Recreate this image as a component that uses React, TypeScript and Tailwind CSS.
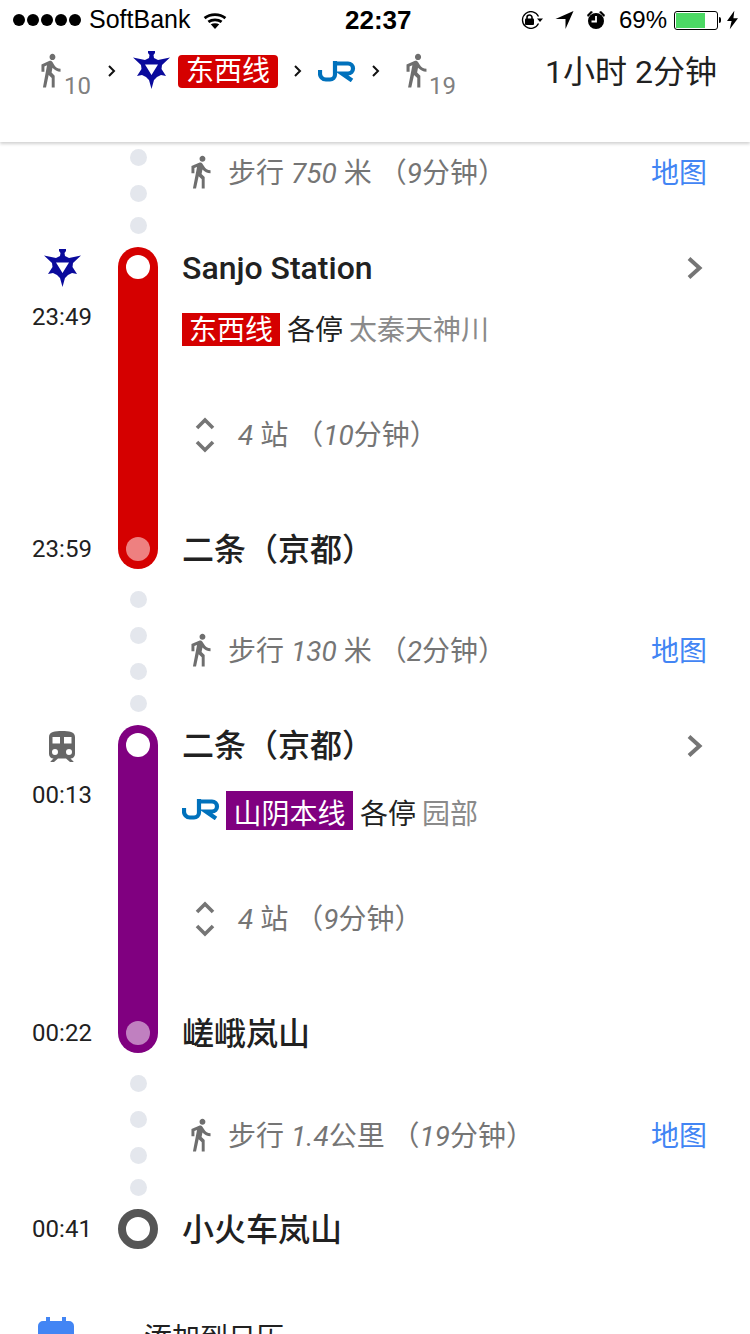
import React from 'react';

const font = "font-['Roboto','Noto_Sans_CJK_SC',sans-serif]";

const WalkIcon = ({ className }: { className: string }) => (
    <svg viewBox="5 1 15 23" className={className} fill="#6e6e6e" preserveAspectRatio="none">
        <path d="M13.5 5.5c1.1 0 2-.9 2-2s-.9-2-2-2-2 .9-2 2 .9 2 2 2zM9.8 8.9L7 23h2.1l1.8-8 2.1 2v6h2v-7.5l-2.1-2 .6-3C14.8 12 16.8 13 19 13v-2c-1.9 0-3.5-1-4.3-2.4l-1-1.6c-.4-.6-1-1-1.7-1-.3 0-.5.1-.8.1L6 8.3V13h2V9.6l1.8-.7" />
    </svg>
);

// Kyoto subway mark
const SubwayLogo = ({ className }: { className: string }) => (
    <svg viewBox="0 0 37 38" className={className}>
        <path
            fill="#0a0a9c"
            fillRule="evenodd"
            d="M15 0L22 0L22 2L20.500 4L21 7L25 9L37 6.500L29 14L28.500 18L33 25L28 24L24 26L21 29L18.500 38L16 29L13 26L9 24L4 25L8.500 18L8 14L0 6.500L12 9L16 7L16.500 4L15 2ZM12 13.500L25 13.500L18.500 24Z"
        />
    </svg>
);

const JrLogo = ({ className }: { className: string }) => (
    <svg viewBox="0 0 38 21" className={className} fill="none" stroke="#0071bc" strokeWidth="4.2">
        <path d="M2 9v3a6 6 0 0 0 6 6.500h4a5 5 0 0 0 5-5V0" />
        <path d="M19 2.500h11a5 5 0 0 1 0 10h-6l10 7" />
    </svg>
);

const Chevron = () => (
    <svg viewBox="0 0 8 12" className="h-3 w-2" fill="none" stroke="#111" strokeWidth="2">
        <path d="M1 1l5 5-5 5" />
    </svg>
);

const StatusBar = () => (
    <div className="flex h-10 items-center pl-[13px] font-['Liberation_Sans',sans-serif] text-[25px] text-black">
        <div className="flex gap-[2px]">
            {[0, 1, 2, 3, 4].map((i) => (
                <span key={i} className="h-3 w-3 rounded-full bg-black" />
            ))}
        </div>
        <span className="ml-2 w-[114px]">SoftBank</span>
        <svg viewBox="0 0 24 18" className="h-[17px] w-[24px]" fill="none" stroke="#000" strokeWidth="3">
            <path d="M1 6.500c6-5 16-5 22 0M5 10.500c4-3 10-3 14 0" />
            <path d="M7.500 13c2.500-1.600 6.500-1.600 9 0L12 18z" fill="#000" stroke="none" />
        </svg>
        <span className="ml-[118px] w-[174px] text-[26px] font-bold">22:37</span>
        <svg viewBox="0 0 24 18" className="h-[18px] w-[24px]" fill="none" stroke="#000" strokeWidth="1.300">
            <path d="M19.500 12.500a8.400 8.400 0 1 1 0-7" />
            <path d="M18 7.500h6l-3 3.500z" fill="#000" stroke="none" />
            <rect x="6" y="7.500" width="9" height="6.500" rx="1" fill="#000" stroke="none" />
            <path d="M8 8V6.500a2.500 2.500 0 0 1 5 0V8" strokeWidth="1.600" />
        </svg>
        <svg viewBox="0 0 18 18" className="ml-3 h-[18px] w-[19px]" fill="#000">
            <path d="M18 0L10 18V8H0z" />
        </svg>
        <svg viewBox="0 0 20 20" className="ml-3 h-[20px] w-[20px]" fill="#000">
            <circle cx="10" cy="11" r="8" />
            <path d="M1 5l4-4 2 1-5 5zM19 5l-4-4-2 1 5 5z" />
            <path d="M10 6v5.500H5.500" fill="none" stroke="#fff" strokeWidth="1.800" />
        </svg>
        <span className="ml-[13px] text-[24px]">69%</span>
        <div className="ml-[7px] flex h-[19px] w-[44px] items-center rounded-[3px] border border-black p-[1px]">
            <div className="h-full w-[29px] bg-[#4cd964]" />
        </div>
        <span className="ml-[1px] h-[6px] w-[2px] rounded-r-full bg-black" />
        <svg viewBox="0 0 12 20" className="ml-[6px] h-[20px] w-[11px]" fill="#000">
            <path d="M8 0L0 11h5l-2 9 9-12H7z" />
        </svg>
    </div>
);

const Header = () => (
    <div className={`relative z-10 h-[142px] bg-white shadow-[0_2px_3px_rgba(0,0,0,0.18)] ${font}`}>
        <StatusBar />
        <div className="flex h-[62px] items-center pl-10 pr-[33px]">
            <WalkIcon className="mb-[1px] h-[36px] w-[22px]" />
            <span className="ml-[2px] mt-[30px] text-[24px] leading-none text-[#808080]">10</span>
            <div className="mb-[1px] ml-[17px]"><Chevron /></div>
            <SubwayLogo className="mb-[2px] ml-[17px] h-[38px] w-[37px]" />
            <span className="ml-2 flex h-[33px] w-[100px] items-center justify-center rounded-[4px] bg-[#d50000] pt-[2px] text-[28px] text-white">东西线</span>
            <div className="mb-[1px] ml-4"><Chevron /></div>
            <JrLogo className="ml-4 h-[21px] w-[38px]" />
            <div className="mb-[1px] ml-4"><Chevron /></div>
            <WalkIcon className="mb-[1px] ml-[25px] h-[36px] w-[23px]" />
            <span className="ml-[1px] mt-[30px] text-[24px] leading-none text-[#808080]">19</span>
            <span className="ml-auto mt-[1px] text-[32px] leading-none text-[#212121]">1小时 2分钟</span>
        </div>
    </div>
);

const Dot = ({ className }: { className: string }) => (
    <span className={`h-[17px] w-[17px] shrink-0 rounded-full bg-[#e4e7ed] ${className}`} />
);

// three gaps in the first walk, the later ones start with a longer drop below the pill
const Dots = ({ first }: { first?: boolean }) => (
    <div className="flex w-10 shrink-0 flex-col items-center">
        {first ? (
            <>
                <Dot className="mt-[7px]" />
                <Dot className="mt-[19px]" />
                <Dot className="mt-[15px]" />
            </>
        ) : (
            <>
                <Dot className="mt-[22px]" />
                <Dot className="mt-[19px]" />
                <Dot className="mt-[19px]" />
                <Dot className="mt-[15px]" />
            </>
        )}
    </div>
);

type WalkProps = { rowClass: string; textClass: string; first?: boolean; children: React.ReactNode };

const WalkRow = ({ rowClass, textClass, first, children }: WalkProps) => (
    <div className={`flex items-start pl-[118px] pr-[43px] ${rowClass}`}>
        <Dots first={first} />
        <div className={`ml-[32px] flex flex-1 items-center ${textClass}`}>
            <WalkIcon className="h-[35px] w-[22px]" />
            <span className="ml-4 whitespace-pre pt-[3px] text-[28px] leading-[36px] text-[#757575]">{children}</span>
            <span className="ml-auto pt-[3px] text-[28px] leading-[36px] text-[#4285f4]">地图</span>
        </div>
    </div>
);

type TransitProps = {
    rowClass: string;
    pillClass: string;
    endDotClass: string;
    icon: React.ReactNode;
    start: string;
    end: string;
    title: string;
    lineClass: string;
    badge: React.ReactNode;
    towards: string;
    stops: string;
    endName: string;
};

const TransitRow = ({ rowClass, pillClass, endDotClass, icon, start, end, title, lineClass, badge, towards, stops, endName }: TransitProps) => (
    <div className={`flex ${rowClass}`}>
        <div className="flex w-[118px] shrink-0 flex-col items-center pl-[6px]">
            <div className="mt-[1px] flex h-[40px] items-center">{icon}</div>
            <span className="mt-[15px] text-[24px] leading-[28px] text-[#212121]">{start}</span>
            <span className="mb-[6px] mt-auto text-[24px] leading-[28px] text-[#212121]">{end}</span>
        </div>
        <div className={`flex w-10 shrink-0 flex-col items-center justify-between rounded-full py-2 ${pillClass}`}>
            <span className="h-6 w-6 rounded-full bg-white" />
            <span className={`h-6 w-6 rounded-full ${endDotClass}`} />
        </div>
        <div className="relative ml-[24px] flex flex-1 flex-col pr-[47px]">
            <div className="flex h-[42px] items-center justify-between">
                <span className="text-[32px] font-medium leading-[42px] text-[#212121]">{title}</span>
                <svg viewBox="0 0 16 24" className="h-6 w-4" fill="none" stroke="#757575" strokeWidth="4">
                    <path d="M2 2.500l10.500 9.500L2 21.500" />
                </svg>
            </div>
            <div className={`flex h-[34px] items-center text-[28px] ${lineClass}`}>
                {badge}
                <span className="ml-[7px] pt-[3px] text-[#212121]">各停</span>
                <span className="ml-[6px] pt-[3px] text-[#8a8a8a]">{towards}</span>
            </div>
            <div className="ml-[13px] mt-[69px] flex items-center">
                <svg viewBox="0 0 20 38" className="h-[38px] w-5" fill="none" stroke="#757575" strokeWidth="3.600">
                    <path d="M2 12l8-8 8 8M2 26l8 8 8-8" />
                </svg>
                <span className="ml-[23px] whitespace-pre pt-[3px] text-[28px] leading-[36px] text-[#757575]">
                    <i>4</i> 站 （<i>{stops}</i>分钟）
                </span>
            </div>
            <span className="absolute bottom-[-2px] left-0 text-[32px] font-medium leading-[42px] text-[#212121]">{endName}</span>
        </div>
    </div>
);

const TrainIcon = () => (
    <svg viewBox="0 0 26 31" className="h-[31px] w-[26px]" fill="#666666">
        <path
            fillRule="evenodd"
            d="M13 0C6 0 0 .8 0 6v17c0 2.500 2 4.500 4.500 4.500L1.500 30.500V31h3.500l4-3.500h8l4 3.500h3.500v-.5l-3-3c2.500 0 4.500-2 4.500-4.500V6c0-5.200-6-6-13-6zM3.500 6h7.500v6.500H3.500zM15 6h7.500v6.500H15zM6 24a3 3 0 1 1 0-6 3 3 0 0 1 0 6zM20 24a3 3 0 1 1 0-6 3 3 0 0 1 0 6z"
        />
    </svg>
);

export default function App() {
    return (
        <div className={`h-[1334px] w-[750px] overflow-hidden bg-white ${font}`}>
            <Header />

            <WalkRow first rowClass="h-[105px]" textClass="mt-[11px]">
                步行 <i>750</i> 米 （<i>9</i>分钟）
            </WalkRow>

            <TransitRow
                rowClass="h-[322px]"
                pillClass="bg-[#d50000]"
                endDotClass="bg-[#ee8080]"
                icon={<SubwayLogo className="h-[38px] w-[37px]" />}
                start="23:49"
                end="23:59"
                title="Sanjo Station"
                lineClass="mt-[23px]"
                badge={<span className="flex h-[33px] w-[98px] items-center justify-center bg-[#d50000] pt-[3px] text-white">东西线</span>}
                towards="太秦天神川"
                stops="10"
                endName="二条（京都）"
            />

            <WalkRow rowClass="h-[156px]" textClass="mt-[62px]">
                步行 <i>130</i> 米 （<i>2</i>分钟）
            </WalkRow>

            <TransitRow
                rowClass="h-[328px]"
                pillClass="bg-[#800080]"
                endDotClass="bg-[#c080c0]"
                icon={<TrainIcon />}
                start="00:13"
                end="00:22"
                title="二条（京都）"
                lineClass="mt-[29px]"
                badge={
                    <>
                        <JrLogo className="mb-[7px] mr-[6px] h-[21px] w-[38px]" />
                        <span className="mb-[6px] flex h-[39px] w-[127px] items-center justify-center bg-[#800080] pt-[9px] text-white">山阴本线</span>
                    </>
                }
                towards="园部"
                stops="9"
                endName="嵯峨岚山"
            />

            <WalkRow rowClass="h-[156px]" textClass="mt-[63px]">
                步行 <i>1.4</i>公里 （<i>19</i>分钟）
            </WalkRow>

            {/* Destination */}
            <div className="flex h-10 items-center">
                <span className="w-[118px] pl-[6px] text-center text-[24px] text-[#212121]">00:41</span>
                <span className="h-10 w-10 rounded-full border-[8px] border-[#555555]" />
                <span className="ml-[24px] pt-[2px] text-[32px] font-medium text-[#212121]">小火车岚山</span>
            </div>

            {/* Calendar */}
            <div className="mt-[68px] flex items-start pl-[38px]">
                <svg viewBox="0 0 36 36" className="h-9 w-9" fill="#4285f4">
                    <path d="M8 0h4v4h12V0h4v4h3a5 5 0 0 1 5 5v22a5 5 0 0 1-5 5H5a5 5 0 0 1-5-5V9a5 5 0 0 1 5-5h3z" />
                </svg>
                <span className="ml-[70px] mt-[2px] text-[28px] leading-[40px] text-[#212121]">添加到日历</span>
            </div>
        </div>
    );
}
